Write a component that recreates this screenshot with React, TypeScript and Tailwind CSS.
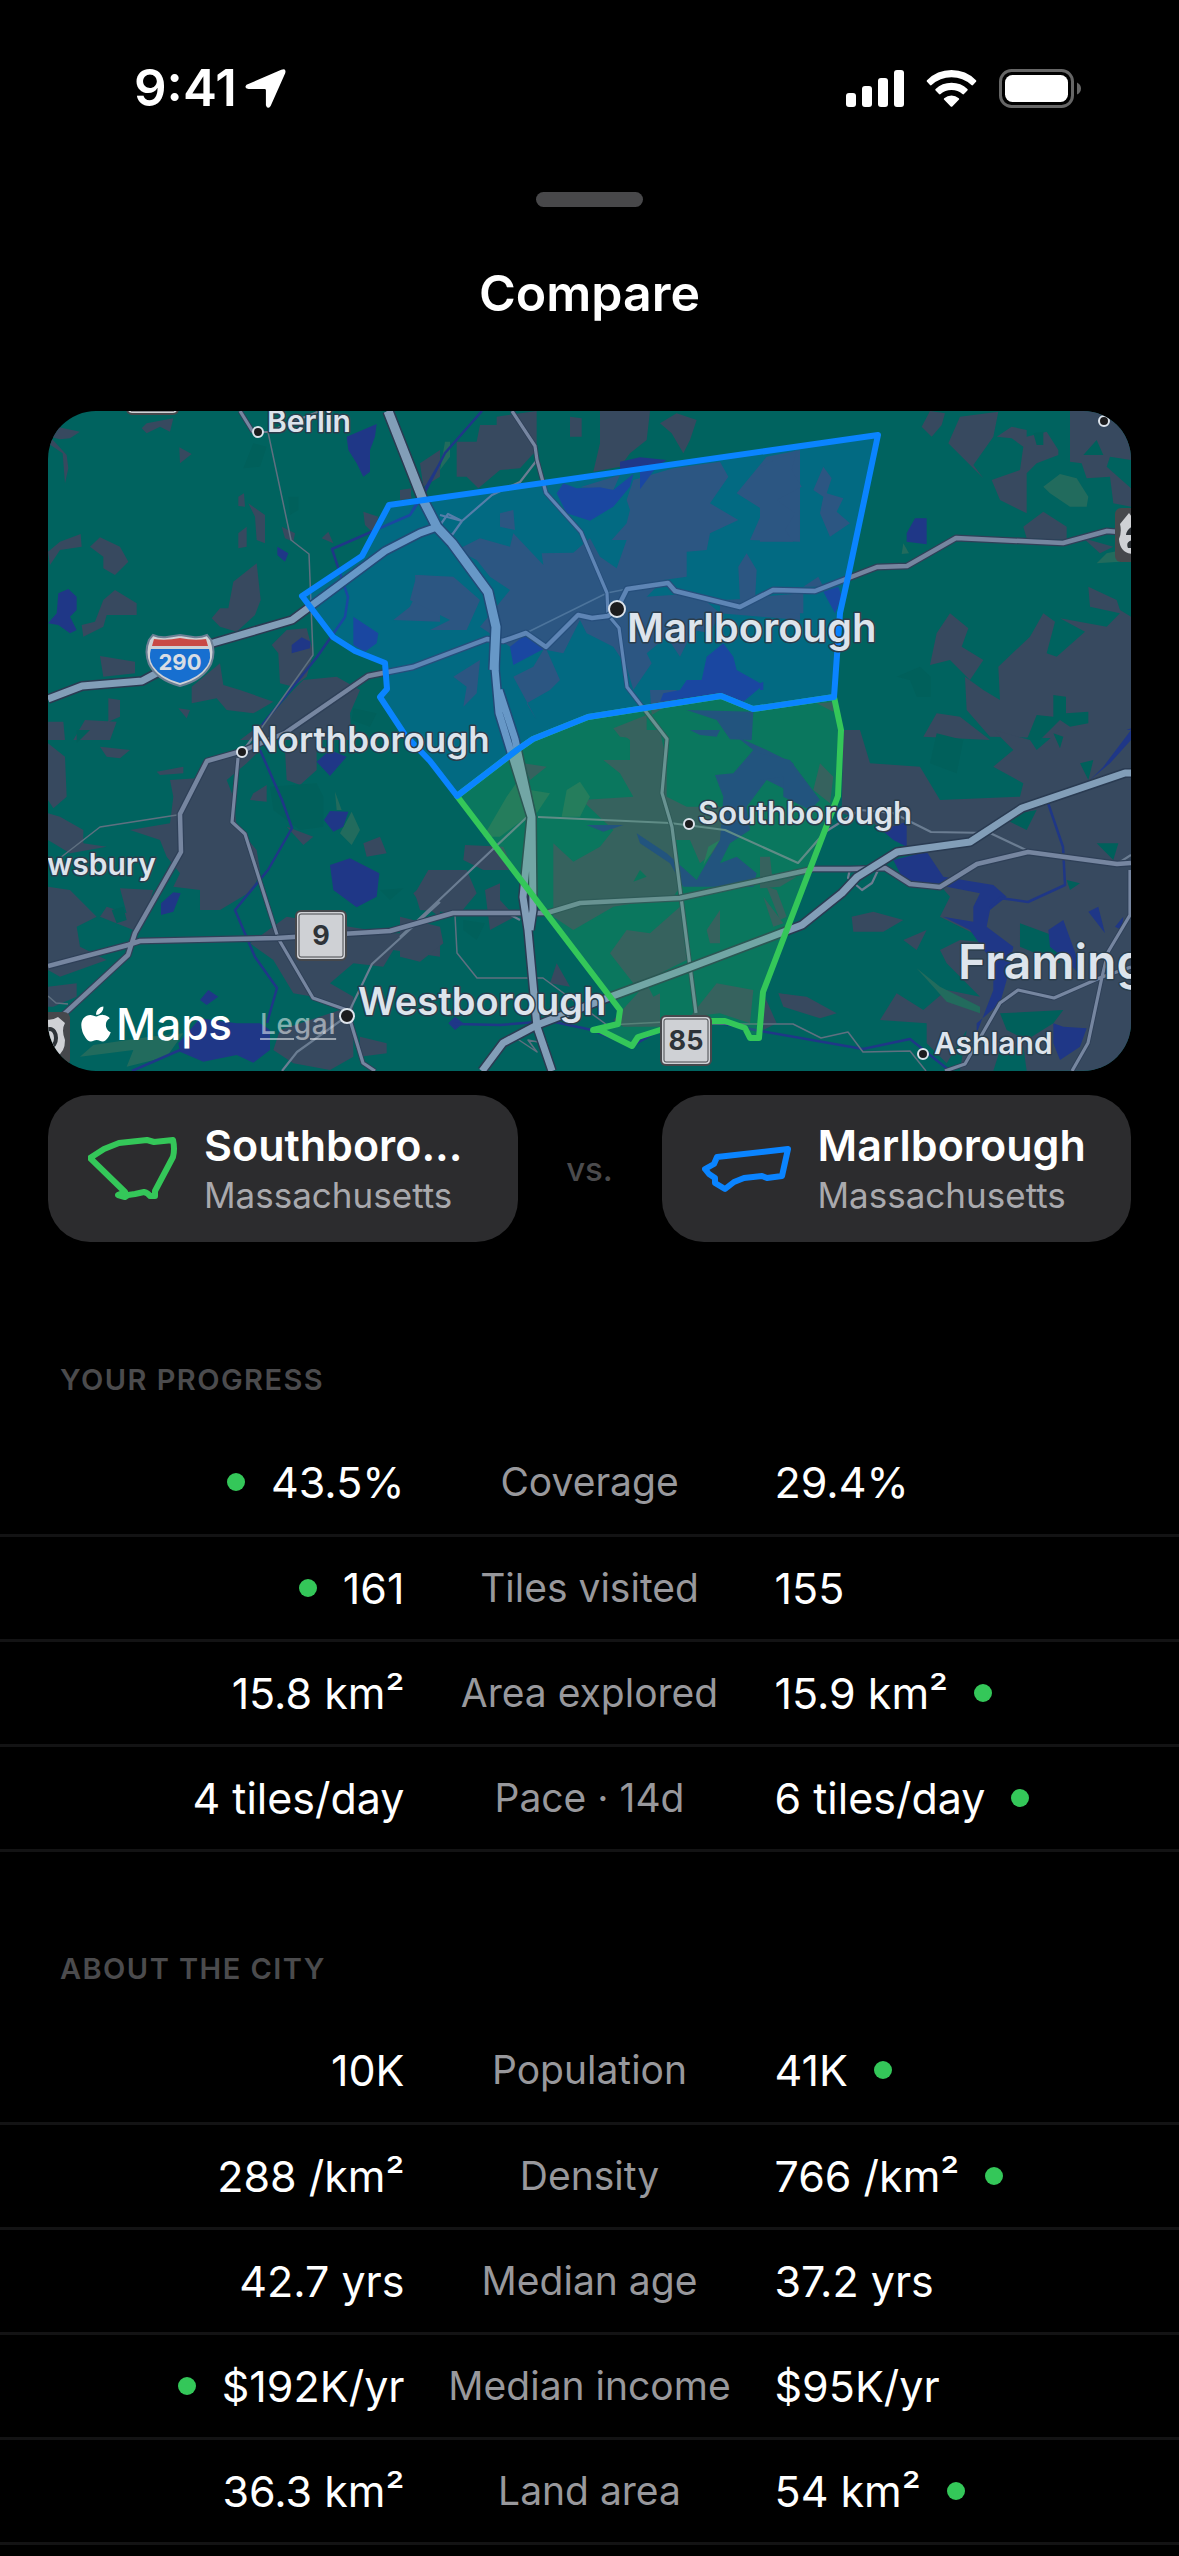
import React from "react";
import { FaApple } from "react-icons/fa";

type Side = "left" | "right";

interface Metric {
  label: string;
  left: string;
  right: string;
  winner?: Side;
}

interface Tile {
  x: number;
  y: number;
  land: string;
  water: string;
  park?: string;
  woods?: string;
}

const PROGRESS: Metric[] = [
  { label: "Coverage", left: "43.5%", right: "29.4%", winner: "left" },
  { label: "Tiles visited", left: "161", right: "155", winner: "left" },
  { label: "Area explored", left: "15.8 km²", right: "15.9 km²", winner: "right" },
  { label: "Pace · 14d", left: "4 tiles/day", right: "6 tiles/day", winner: "right" },
];

const ABOUT: Metric[] = [
  { label: "Population", left: "10K", right: "41K", winner: "right" },
  { label: "Density", left: "288 /km²", right: "766 /km²", winner: "right" },
  { label: "Median age", left: "42.7 yrs", right: "37.2 yrs" },
  { label: "Median income", left: "$192K/yr", right: "$95K/yr", winner: "left" },
  { label: "Land area", left: "36.3 km²", right: "54 km²", winner: "right" },
];

const MARLBOROUGH =
  "M389 505 362 556 302 596 333 637 355 651 385 663 387 689 380 697 405 735 430 761 457 796 517 750 533 739 588 717 721 696 753 709 834 697 840 613 848 577 878 435Z";
const SOUTHBOROUGH =
  "M457 796 517 750 533 739 588 717 721 696 753 709 834 697 841 730 838 796 763 992 759 1038 750 1038 745 1028 725 1021 710 1021 685 1030 660 1030 638 1037 632 1046 600 1030 593 1030 618 1024 620 1010Z";

// Ground cover, drawn per tile at three units to the map unit
const TILES: Tile[] = [
  {
    x: 40,
    y: 400,
    land: "M50 80 120 95 90 115 60 118 30 110 80 165 85 205 75 250 68 160 24 130ZM320 70 400 55 390 95 360 80 320 100 305 85ZM418 142 455 162 420 190ZM24 455 60 425 122 402 125 440 60 450 30 495ZM150 440 180 412 240 440 265 485 225 525 190 505 190 470ZM125 675 165 665 190 600 225 570 290 610 290 645 200 645 190 680 130 710ZM595 290 612 280 615 320 595 318ZM625 310 675 345 675 430 650 420 645 350ZM595 400 620 380 620 440 595 445ZM515 655 540 625 565 625 580 545 650 490 662 600 645 645 590 695 540 680ZM180 768 285 785 285 820 190 830ZM725 380 765 400 760 425 735 415ZM455 860 540 790 550 855 600 870 700 905 640 940 560 930 530 895 455 910ZM695 735 740 690 800 685 820 760 800 830 760 860 720 850 715 760ZM205 895 240 900 240 950 205 965ZM415 925 450 930 440 955ZM24 965 70 965 75 1020 24 1020ZM135 960 230 965 210 1020 100 1020ZM790 840 890 830 960 870 930 940 935 1020 600 1020 680 960 760 870ZM970 335 1015 350 1000 400 975 375ZM1140 190 1200 150 1200 230 1150 260ZM1080 275 1110 270 1115 295 1085 300ZM1125 525 1200 530 1200 665 1060 660 1110 620 1130 580ZM865 395 880 430 845 415Z",
    water:
      "M920 110 1010 72 1005 110 990 150 990 215 970 230 950 190 925 150ZM712 440 745 460 735 485 712 465ZM55 580 85 567 110 590 110 630 90 650 110 690 90 700 55 675 24 670 50 640ZM785 712 812 725 810 745 755 760 755 735ZM940 650 1015 700 1010 730 975 755 940 735Z",
    woods:
      "M640 130 680 140 660 200 610 205ZM745 290 775 290 775 330 750 345ZM940 925 1010 940 990 980 935 960Z",
  },
  {
    x: 400,
    y: 400,
    land: "M290 50 410 33 410 150 360 205 300 210 235 265 200 230 170 230 170 125 230 125 240 75 290 75ZM510 50 545 55 545 110 510 110ZM600 33 750 33 740 120 690 160 660 200 580 215 600 130ZM780 70 830 40 890 60 870 120 850 160 815 100ZM0 270 35 265 30 290 0 300ZM300 340 340 330 345 390 300 380ZM170 450 240 415 330 440 340 400 430 495 425 460 520 458 570 415 600 470 650 505 680 420 635 420 680 370 690 330 680 300 700 240 820 205 960 185 985 230 930 310 1015 360 930 400 920 450 860 455 860 530 790 540 740 590 890 580 960 640 930 700 880 690 840 770 800 710 740 760 755 790 700 870 680 800 640 740 560 700 540 660 490 760 440 750 480 840 450 870 380 910 410 960 340 830 400 800 430 750 330 740 240 680 330 570 270 530 230 480ZM540 262 660 225 640 270ZM1200 150 1100 170 1010 280 1090 330 1050 420 1200 425ZM1040 460 1070 510 1065 600 1020 600 1015 500ZM50 525 160 530 240 600 200 690 90 690 150 660 30 600ZM160 830 240 780 230 880 190 920 200 860ZM960 600 1200 590 1200 660 960 640ZM750 870 830 870 830 900 755 945ZM640 985 740 945 740 1020 660 1010Z",
    water:
      "M470 280 490 250 530 265 600 262 640 270 700 222 690 260 640 320 570 362 500 340ZM660 185 720 172 800 180 770 200 720 268 720 210 660 215ZM330 740 375 705 435 745 340 795ZM920 770 970 730 1000 770 1010 810 1090 855 1030 905 960 880 780 905 790 880 840 870 860 840 905 840ZM860 930 1060 935 1055 1020 990 1018 950 960Z",
    park: "M135 125 150 125 150 170 120 210Z",
  },
  {
    x: 760,
    y: 400,
    land: "M510 33 555 40 545 75 515 110 485 80ZM600 50 715 35 700 110 640 195 670 235 565 130ZM710 110 755 80 800 90 800 110 860 95 895 150 895 165 830 190 800 220 800 340 720 300 695 240 780 210 790 140 755 115ZM930 33 1000 33 1113 33 1113 180 1050 170 1040 200 1113 265 1113 320 1060 310 1050 230 980 235 965 190 930 185ZM790 380 850 335 920 380 920 420 800 415ZM970 415 1060 440 1020 460ZM985 560 1070 600 1080 630 1113 650 1113 1020 690 1010 620 930 615 830 670 870 720 900 715 800 810 710 850 640 885 665 860 760 890 770 975 695 900 655 1040 680 1080 640 990 620ZM570 640 625 685 605 740 670 780 630 840 570 780 510 795 530 700ZM530 940 600 950 690 1020 490 1010ZM0 200 110 150 95 210 125 260 50 300 105 340 75 390 100 425 0 425ZM190 200 215 235 200 280 250 295 230 335 270 370 210 410 180 340 190 290 160 270ZM0 590 130 580 130 640 0 640ZM130 560 175 530 190 560ZM170 910 225 905 220 935Z",
    water:
      "M440 400 465 355 500 355 500 433 440 425ZM190 575 235 560 245 590 225 640ZM1085 995 1113 985 1113 1020 1090 1020ZM0 850 10 845 10 870 0 870Z",
    park: "M850 260 900 222 950 235 985 290 980 320 930 320 870 280ZM430 430 447 460 425 462ZM1010 490 1040 460 1113 445 1080 485Z",
    woods:
      "M880 885 918 890 918 940 985 935 985 970 930 980 900 960 840 1020 800 1020 830 945 880 950ZM410 830 480 800 512 830 512 890 470 890 450 840ZM970 165 1010 120 1030 165ZM820 100 850 95 850 135 830 135Z",
  },
  {
    x: 40,
    y: 730,
    land: "M24 40 75 80 80 200 40 235 24 210ZM24 250 60 260 130 300 130 340 200 350 90 370 24 330ZM180 50 270 60 240 85 200 80ZM350 125 430 110 430 130 360 135ZM390 150 470 145 500 90 600 60 660 60 620 100 560 150 580 200 590 290 650 360 660 420 640 480 540 540 480 540 480 480 400 470 420 430 380 380 360 330 270 300 390 280 400 200ZM24 470 90 480 170 560 110 590 120 650 200 690 60 740 24 720ZM240 475 340 480 320 550 280 600 180 560 200 530 260 550ZM740 560 1050 610 1200 610 1200 680 1060 660 1030 710 940 700 870 760 940 800 940 980 870 1020 760 1000 700 960 720 900 900 840 820 800 760 790 700 690 630 640ZM735 60 830 20 830 120 780 165 740 150ZM640 190 680 165 680 215 630 210ZM740 290 820 320 790 345ZM970 340 1020 320 1040 370 980 380ZM1120 490 1200 420 1200 560 1140 520ZM960 920 1040 940 1040 970 960 980ZM24 770 110 760 110 800 40 830 24 830Z",
    water:
      "M830 95 870 60 920 80 870 138ZM852 270 870 243 925 245 910 290 880 305ZM870 405 930 385 1018 430 1010 500 950 532 880 480ZM363 520 400 487 422 490 400 545 363 555ZM480 810 505 780 535 800 500 825ZM415 940 480 865 590 880 660 880 690 900 690 960 640 998 590 975 490 995 420 965Z",
    park: "M160 945 330 920 430 910 380 980 260 1010 280 960 120 980ZM935 245 960 300 935 345 900 310ZM885 185 905 240 890 240Z",
    woods:
      "M690 170 830 160 850 200 850 290 780 300 700 240ZM215 540 250 530 260 570 230 580ZM1020 480 1090 475 1050 510ZM110 0 150 0 110 40Z",
  },
  {
    x: 400,
    y: 730,
    land: "M195 345 310 350 340 420 250 420 190 390ZM85 420 200 420 230 490 180 550 60 540 45 490ZM0 560 120 590 130 640 60 695 0 680ZM255 480 300 460 300 510 345 560 270 600ZM470 700 510 770 450 760ZM370 100 440 110 390 150ZM545 210 700 200 660 130 610 90 690 90 690 30 650 0 780 0 800 100 800 200 860 230 980 230 960 350 900 400 870 330 820 330 840 470 820 500 640 530 520 600 460 560 460 340 520 395 600 350 640 300ZM630 670 680 600 750 610 840 530 860 690 760 740 700 760ZM920 600 960 540 960 640 930 640ZM870 860 950 760 1060 780 1050 880 960 850ZM1090 790 1130 880 1090 900ZM1135 790 1200 800 1200 840ZM1080 380 1110 380 1120 470 1080 470ZM1100 470 1130 480 1160 560 1140 570ZM640 870 740 760 760 800 780 790 780 890 670 890Z",
    water:
      "M945 135 1000 130 1060 60 1010 20 1100 60 1180 100 1200 200 1100 150 1040 230 1050 300 990 340 960 400 1010 380 1070 430 1060 470 850 470 810 400 720 340 710 310 800 370 890 450 960 330 970 200ZM870 0 960 0 950 20 900 15ZM560 285 670 285 610 305ZM145 880 165 860 190 880 165 900Z",
    park: "M500 180 540 155 570 200 540 260 485 260ZM320 200 370 130 390 230 380 260 300 320 250 320ZM925 350 960 330 910 405ZM390 180 450 190 410 250Z",
    woods: "M190 570 255 580 230 630 190 600ZM720 420 740 440 700 455Z",
  },
  {
    x: 760,
    y: 730,
    land: "M250 0 300 0 330 100 480 110 540 210 780 200 790 160 700 110 760 60 700 0 810 30 830 60 900 0 1113 0 1113 1022 800 1022 790 950 720 960 700 1022 600 1022 620 900 560 1000 500 940 500 880 360 870 410 790 490 840 560 780 660 800 560 700 540 660 600 630 700 640 540 560 570 500 440 350 340 280 245 250ZM275 560 340 545 430 570 370 605 280 605ZM430 630 500 600 470 660ZM55 790 140 800 230 850 180 865 70 830ZM180 100 220 140 210 220 160 180ZM0 460 110 440 60 470 0 475ZM10 500 70 580 40 590Z",
    water:
      "M0 70 90 90 180 210 150 240 70 200 70 140 0 150ZM365 300 440 275 440 350 400 330ZM400 390 500 365 550 440 700 465 740 500 690 540 680 590 760 650 740 750 720 820 650 880 650 910 700 780 700 700 630 600 550 560 640 575 640 530 660 490 560 470 430 450ZM865 600 910 570 950 680 970 750 930 700 870 650ZM985 545 1015 530 1035 610ZM880 880 910 890 980 895 960 950 900 990 880 940ZM1065 590 1090 560 1085 600ZM1030 110 1113 0 1113 30 1050 100 990 150Z",
    park: "M470 715 540 770 660 830 660 850 560 815 520 770Z",
    woods:
      "M780 580 890 620 900 700 780 650ZM720 850 910 840 880 880 800 930 740 900ZM1010 340 1075 340 1060 390ZM720 260 830 240 800 300ZM920 450 960 460 930 480ZM960 100 1000 90 985 150ZM880 10 910 20 900 55ZM530 10 610 30 590 130 510 100Z",
  },
];

const RIVERS =
  "M440 463 410 515 332 549 348 597 345 617 317 657 262 725M260 750 282 800 292 828 268 870 235 910 255 957 277 988 267 1023M482 411 445 453 425 492 410 515M180 1050 132 1071M455 1024 500 1025 550 1021 592 1030 632 1046 660 1030 710 1021 760 1031 863 1049 910 1039 950 1071M1048 803 1063 847 1065 885 1028 902 1000 898 990 908";
const LANES =
  "M268 432 291 540 309 554 313 655 260 730M177 815 100 827 60 858M455 915 457 953 477 978 543 978 607 1025 665 1022 700 1024 793 1024 821 1038 848 1032 863 1052 910 1051 926 1071M526 633 607 593 627 589M48 996 56 1003 68 1004M516 1038 537 1052 528 1040 548 1044";
const LOCAL_ROADS =
  "M538 817 670 823 725 830 798 863 825 832 860 810 893 813 931 832 990 833 1028 851M440 902 372 964 347 1016 297 1052 282 1071M527 817 400 937M537 460 520 482 492 495 462 521 440 515M462 521 452 535 438 528 448 514 462 521M255 432 268 432 320 411M242 752 260 728M1117 864 1131 855M850 869 848 878 862 890 872 883 880 866M505 912 520 920";
const ROADS =
  "M512 411 535 446 537 460 546 493 581 532 607 593 608 615 619 628 627 687 667 739 662 793 672 827 681 897 696 1013M240 411 253 432M238 758 232 822 245 834 278 938 313 998 347 1010 363 1063 375 1071M1130 870 1130 915 1108 952 1102 977 1088 1043 1072 1071M1131 967 1102 977 1054 998 1018 990 1000 1003 965 1064 945 1071";
const ROUTES =
  "M48 966 128 945 140 941 277 938 390 931 453 913 547 913 580 903 680 898 813 869 850 869 885 868 910 884 940 887 977 864 1028 852 1117 864 1131 863M62 1016 128 955 135 933 181 852 180 814 207 761 242 751 285 733 368 676 413 667 487 639 503 641 526 633 546 647 578 615 592 618 608 616 617 609 627 589 668 583 675 591 740 607 773 590 815 591 877 567 907 566 956 538 1063 543 1107 531 1131 533";
const HIGHWAYS =
  "M48 699 82 686 142 681 213 643 292 620 385 551 420 533 437 527M1131 773 1125 773 1022 808 970 842 897 852 857 877 842 893 802 925 683 970 610 997 537 1025 503 1043 482 1071";
const INTERSTATE =
  "M388 411 423 500 435 525 452 543 488 592 496 627 494 657 499 713 507 739 514 762 531 817 523 897 528 930 537 1027 552 1071M499 690 515 739 532 817 533 910 530 930";
const INTERSTATE_NORTH =
  "M388 411 423 500 437 527 452 543 488 592 496 627 494 670";

const PLACES = [
  { name: "Berlin", x: 267, y: 432, size: 30, dot: [258, 432, 5] },
  { name: "Marlborough", x: 627, y: 642, size: 40, dot: [617, 609, 8] },
  { name: "Northborough", x: 251, y: 752, size: 35, dot: [242, 752, 5] },
  { name: "Southborough", x: 698, y: 824, size: 31, dot: [689, 824, 5] },
  { name: "Westborough", x: 358, y: 1015, size: 38, dot: [347, 1016, 7] },
  { name: "Ashland", x: 934, y: 1054, size: 30, dot: [923, 1054, 5] },
  { name: "wsbury", x: 47, y: 875, size: 30 },
  { name: "Framing", x: 958, y: 979, size: 48 },
];

const RouteSign: React.FC<{ x: number; y: number; label: string }> = ({
  x,
  y,
  label,
}) => (
  <g>
    <rect x={x} y={y} width="52" height="51" rx="6" fill="#46484c" />
    <rect x={x + 2} y={y + 2} width="48" height="47" rx="4" fill="#cfd1d5" />
    <rect
      x={x + 4}
      y={y + 4}
      width="44"
      height="43"
      rx="2"
      fill="none"
      stroke="#46484c"
    />
    <text
      x={x + 26}
      y={y + 35}
      textAnchor="middle"
      fontSize="27"
      fontWeight="700"
      fill="#2e3338"
    >
      {label}
    </text>
  </g>
);

const CityMap: React.FC = () => (
  <svg
    viewBox="48 411 1083 660"
    className="block w-full font-[Inter,'Liberation_Sans',sans-serif]"
    role="img"
    aria-label="Map of Southborough and Marlborough"
  >
    <rect x="48" y="411" width="1083" height="660" fill="#00635f" />
    {TILES.map((tile) => (
      <g
        key={`${tile.x}-${tile.y}`}
        transform={`translate(${tile.x} ${tile.y}) scale(0.33333)`}
      >
        <path d={tile.land} fill="#37495f" />
        {tile.woods && <path d={tile.woods} fill="#00605b" />}
        {tile.park && <path d={tile.park} fill="#226b5d" />}
        <path d={tile.water} fill="#1f3787" />
      </g>
    ))}

    <g fill="none" strokeLinejoin="round">
      <path d={RIVERS} stroke="#1f3787" strokeWidth="2.5" />
      <path d={LANES} stroke="#5f7080" strokeWidth="1.5" />
      <path d={LOCAL_ROADS} stroke="#6b7d92" strokeWidth="2.2" />
      <path d={ROADS} stroke="#2f4058" strokeWidth="5" />
      <path d={ROADS} stroke="#7686a0" strokeWidth="3.2" />
      <path d={ROUTES} stroke="#2f4058" strokeWidth="7" />
      <path d={ROUTES} stroke="#7686a0" strokeWidth="4.5" />
      <path d={HIGHWAYS} stroke="#2a3b52" strokeWidth="10" />
      <path d={INTERSTATE} stroke="#2a3b52" strokeWidth="10" />
      <path d={INTERSTATE_NORTH} stroke="#2a3b52" strokeWidth="12" />
      <path d={HIGHWAYS} stroke="#829eb8" strokeWidth="7" />
      <path d={INTERSTATE} stroke="#829eb8" strokeWidth="7" />
      <path d={INTERSTATE_NORTH} stroke="#829eb8" strokeWidth="9" />
    </g>

    <g strokeWidth="6" strokeLinejoin="round">
      <path d={SOUTHBOROUGH} fill="#34c759" fillOpacity="0.2" stroke="#34c759" />
      <path d={MARLBOROUGH} fill="#0a84ff" fillOpacity="0.22" stroke="#0a84ff" />
    </g>

    {/* Interstate 290 */}
    <path
      d="M153 635Q160 638 167 637L180 635 193 637Q200 638 207 635L211 640Q216 652 211 664 203 680 180 686 157 680 149 664 144 652 149 640Z"
      fill="#cfd1d5"
      stroke="#6c7f94"
      strokeWidth="2"
    />
    <path d="M154 639Q166 641 180 638 194 641 206 639L208 646H152Z" fill="#c94a46" />
    <path d="M151 649H209Q212 658 207 666 199 678 180 683 161 678 153 666 148 658 151 649Z" fill="#176fd0" />
    <text x="180" y="670" textAnchor="middle" fontSize="22" fontWeight="700" fill="#d8dde4">
      290
    </text>

    <rect x="126" y="370" width="53" height="45" rx="6" fill="#46484c" />
    <rect x="128" y="370" width="49" height="43" rx="4" fill="#cfd1d5" />
    <path d="M131 411H174" stroke="#46484c" />
    <RouteSign x={295} y={910} label="9" />
    <RouteSign x={660} y={1015} label="85" />

    {/* US route shields cut by the map edge */}
    <rect x="1115" y="508" width="50" height="54" rx="6" fill="#46484c" />
    <path d="M1129 513 1134 520V554Q1120 554 1119 539 1122 532 1120 524Z" fill="#cfd1d5" />
    <path d="M1134 526Q1127 528 1126 535H1134M1134 540Q1125 541 1128 548H1134Z" fill="#2e3338" />
    <rect x="20" y="1012" width="50" height="54" rx="6" fill="#46484c" />
    <path d="M42 1018Q50 1022 58 1017L65 1023Q61 1030 65 1040 65 1052 57 1056H42Z" fill="#cfd1d5" />
    <ellipse cx="50" cy="1038" rx="6" ry="9" fill="none" stroke="#2e3338" strokeWidth="4" />

    <circle cx="1104" cy="421" r="5" fill="#1c1c1e" stroke="#dde4ec" strokeWidth="2" />
    {PLACES.map((place) => (
      <g key={place.name}>
        {place.dot && (
          <circle
            cx={place.dot[0]}
            cy={place.dot[1]}
            r={place.dot[2]}
            fill="#1c1c1e"
            stroke="#dde4ec"
            strokeWidth="2"
          />
        )}
        <text
          x={place.x}
          y={place.y}
          fontSize={place.size}
          fontWeight="600"
          fill="#dde4ec"
          stroke="#2b3d4c"
          strokeWidth="3"
          strokeLinejoin="round"
          paintOrder="stroke"
        >
          {place.name}
        </text>
      </g>
    ))}
  </svg>
);

const StatusBar: React.FC = () => (
  <header className="flex items-center justify-between pt-[58px] pr-[98px] pl-[134px]">
    <div className="flex items-center gap-2">
      <span className="text-[51px] leading-[60px] font-semibold">9:41</span>
      <svg viewBox="0 0 40 38" className="h-[39px] w-[41px]" fill="#fff">
        <path d="M35.4 0.8Q40.6-1.2 39.2 4L25 36Q22 40 20.4 35.4V20.6Q20.3 19.6 19.3 19.6H3.4Q-1.4 18.6 1.5 15.4Z" />
      </svg>
    </div>
    <div className="flex items-center gap-[22px]">
      <svg viewBox="0 0 58 37" className="h-[37px] w-[58px]" fill="#fff">
        <rect x="0" y="23" width="10" height="14" rx="3" />
        <rect x="16" y="16" width="10" height="21" rx="3" />
        <rect x="32" y="8" width="10" height="29" rx="3" />
        <rect x="48" y="0" width="10" height="37" rx="3" />
      </svg>
      <svg viewBox="0 0 51 37" className="h-[37px] w-[51px]" fill="#fff">
        <path d="M25.5 0Q40 0 50 10.2 50.8 11 50 11.8L47 15Q46.2 15.8 45.4 15 37 7.2 25.5 7.2T5.6 15Q4.8 15.8 4 15L1 11.8Q.2 11 1 10.2 11 0 25.5 0Z" />
        <path d="M25.5 12.8Q35 12.8 41.4 19 42.2 19.8 41.4 20.6L38 24Q37.2 24.8 36.4 24 32 20 25.5 20T14.6 24Q13.8 24.8 13 24L9.6 20.6Q8.8 19.8 9.6 19 16 12.8 25.5 12.8Z" />
        <path d="M25.5 25.4Q29.6 25.4 32.8 28.2 33.6 29 32.8 29.8L26.3 36.4Q25.5 37.2 24.7 36.4L18.2 29.8Q17.4 29 18.2 28.2 21.4 25.4 25.5 25.4Z" />
      </svg>
      <svg viewBox="0 0 82 39" className="h-[39px] w-[82px]">
        <rect x="1.5" y="1.5" width="72" height="36" rx="11" fill="none" stroke="#666" strokeWidth="3" />
        <rect x="6" y="6" width="63" height="27" rx="7.5" fill="#fff" />
        <path d="M78 13.5Q82 15.5 82 19.5T78 25.5Z" fill="#666" />
      </svg>
    </div>
  </header>
);

const CityCard: React.FC<{ name: string; state: string; children: React.ReactNode }> = ({
  name,
  state,
  children,
}) => (
  <button
    type="button"
    className="flex h-[147px] min-w-0 flex-1 items-center gap-6 rounded-[42px] bg-[#2c2c2e] pl-10 text-left"
  >
    {children}
    <span className="flex flex-col whitespace-nowrap">
      <span className="text-[43px] leading-[52px] font-semibold">{name}</span>
      <span className="text-[35px] leading-[48px] text-[#a9a9ad]">{state}</span>
    </span>
  </button>
);

const WinnerDot: React.FC = () => (
  <span className="size-[18px] shrink-0 rounded-full bg-[#34c759]" />
);

const MetricSection: React.FC<{ title: string; metrics: Metric[] }> = ({
  title,
  metrics,
}) => (
  <section>
    <h2 className="px-[60px] text-[29px] leading-9 font-semibold tracking-wider text-[#4b4b4d]">
      {title}
    </h2>
    <table className="mt-8 w-full table-fixed border-collapse whitespace-nowrap">
      <colgroup>
        <col />
        <col className="w-[370px]" />
        <col />
      </colgroup>
      <tbody>
        {metrics.map((metric) => (
          <tr key={metric.label} className="h-[105px] border-b-3 border-[#131314]">
            <td className="p-0">
              <div className="flex items-center justify-end gap-[26px] text-[43px] leading-[54px]">
                {metric.winner === "left" && <WinnerDot />}
                {metric.left}
              </div>
            </td>
            <th
              scope="row"
              className="p-0 text-center text-[39px] leading-[54px] font-normal text-[#98989c]"
            >
              {metric.label}
            </th>
            <td className="p-0">
              <div className="flex items-center gap-[26px] text-[43px] leading-[54px]">
                {metric.right}
                {metric.winner === "right" && <WinnerDot />}
              </div>
            </td>
          </tr>
        ))}
      </tbody>
    </table>
  </section>
);

export default function App() {
  return (
    <div className="min-h-screen bg-black font-[Inter,'Liberation_Sans',sans-serif] text-white">
      <StatusBar />

      <div className="mx-auto mt-[74px] h-[15px] w-[107px] rounded-full bg-[#48484a]" />
      <h1 className="mt-14 text-center text-[50px] leading-[60px] font-semibold">
        Compare
      </h1>

      <main className="mt-[88px]">
        <div className="px-12">
          <div className="relative overflow-hidden rounded-[48px]">
            <CityMap />
            <div className="absolute bottom-5 left-8 flex items-center gap-7">
              <div className="flex items-center gap-1">
                <FaApple className="h-10 w-8" />
                <span className="text-[44px] leading-[54px] font-medium">Maps</span>
              </div>
              <a
                href="#legal"
                className="text-[28px] leading-10 font-medium tracking-wide text-white/50 underline underline-offset-4"
              >
                Legal
              </a>
            </div>
          </div>

          <div className="mt-6 flex items-center">
            <CityCard name="Southboro..." state="Massachusetts">
              <svg viewBox="0 0 92 64" className="h-16 w-[92px] shrink-0" fill="none" stroke="#34c759" strokeWidth="6" strokeLinejoin="round">
                <path d="M2 21 16 12 31 6 59 3 66 5 85 3Q87 12 85 20L67 54V59H62Q60 56 56 55L47 57 40 58 37 60 30 58 37 55Z" />
              </svg>
            </CityCard>
            <span className="w-36 shrink-0 text-center text-[33px] leading-10 font-medium text-[#4b4b4d]">
              vs.
            </span>
            <CityCard name="Marlborough" state="Massachusetts">
              <svg viewBox="0 0 92 64" className="h-16 w-[92px] shrink-0" fill="none" stroke="#0a84ff" strokeWidth="6" strokeLinejoin="round">
                <path d="M15 20 12 27 3 32 7 37 13 41V46L23 52 32 45 42 41 60 39 65 41 80 39 86 12Z" />
              </svg>
            </CityCard>
          </div>
        </div>

        <div className="mt-[120px] flex flex-col gap-[99px]">
          <MetricSection title="YOUR PROGRESS" metrics={PROGRESS} />
          <MetricSection title="ABOUT THE CITY" metrics={ABOUT} />
        </div>
      </main>
    </div>
  );
}
